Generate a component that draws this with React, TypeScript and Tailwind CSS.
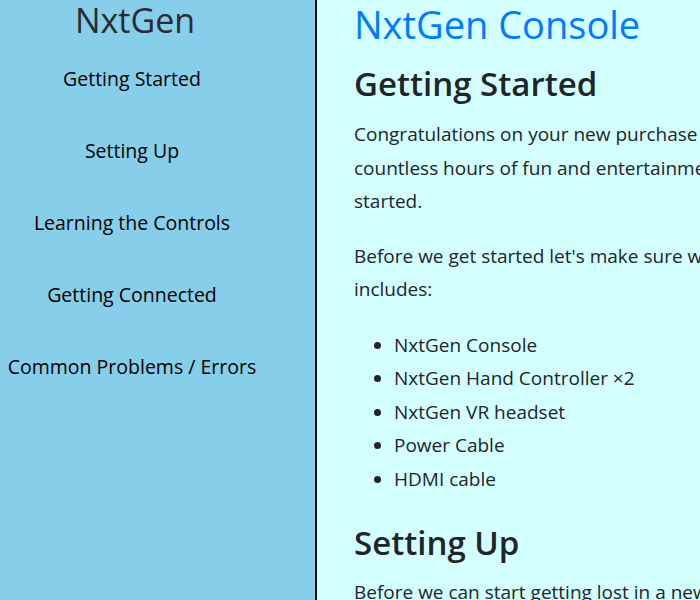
export default function App() {
  const links = [
    "Getting Started",
    "Setting Up",
    "Learning the Controls",
    "Getting Connected",
    "Common Problems / Errors",
  ];

  const items = [
    "NxtGen Console",
    "NxtGen Hand Controller ×2",
    "NxtGen VR headset",
    "Power Cable",
    "HDMI cable",
  ];

  return (
    <div className="flex h-[600px] w-[700px] overflow-hidden font-['Open_Sans',sans-serif] text-[#212529]">
      <nav className="w-[317px] shrink-0 bg-[#87ceeb] border-r-2 border-black">
        <div className="w-[264px] text-center">
          <h2 className="pl-[6px] text-[34px] leading-[40px] text-[#2a2d30]">NxtGen</h2>
          <ul className="mt-[24px] flex flex-col gap-[42px]">
            {links.map((l) => (
              <li key={l} className="text-[19.5px] leading-[30px] text-black">
                {l}
              </li>
            ))}
          </ul>
        </div>
      </nav>

      <main className="flex-1 bg-[#d4ffff] pl-[37px] whitespace-nowrap">
        <h1 className="text-[38px] leading-[48px] text-[#007bff]">NxtGen Console</h1>
        <h2 className="mt-[14px] text-[33px] leading-[44px] font-semibold">Getting Started</h2>
        <p className="mt-[12px] text-[19px] leading-[33.5px]">
          Congratulations on your new purchase of the NxtGen Console! You are about to enjoy
          <br />
          countless hours of fun and entertainment. This guide will help you get
          <br />
          started.
        </p>
        <p className="mt-[21px] text-[19px] leading-[33.5px]">
          Before we get started let's make sure we have everything. Your package
          <br />
          includes:
        </p>
        <ul className="mt-[22px] list-disc pl-[40px] text-[19px] leading-[33.5px]">
          {items.map((i) => (
            <li key={i}>{i}</li>
          ))}
        </ul>
        <h2 className="mt-[25px] text-[33px] leading-[44px] font-semibold">Setting Up</h2>
        <p className="mt-[11px] text-[19px] leading-[33.5px]">
          Before we can start getting lost in a new world, we need to set up the console.
        </p>
      </main>
    </div>
  );
}
